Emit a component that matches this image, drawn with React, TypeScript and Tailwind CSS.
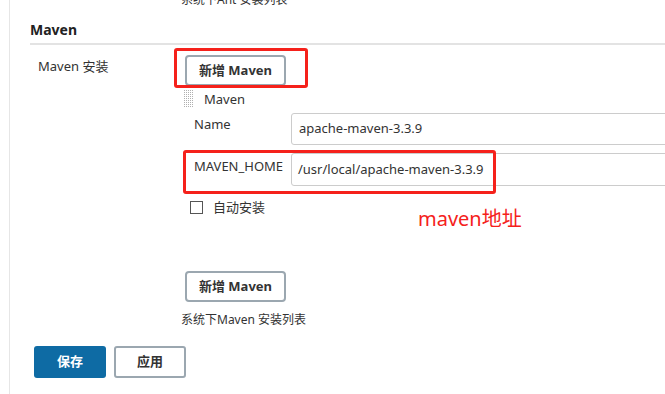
import React from 'react';

const font = { fontFamily: '"Noto Sans", "Noto Sans CJK SC", sans-serif' };

const AddButton = () => (
  <button className="w-[101px] h-[31px] rounded-[4px] border-2 border-[#9ba7b0] bg-white text-[13px] font-bold text-[#333] leading-none">
    新增 Maven
  </button>
);

const DragHandle = () => (
  <svg width="10" height="18" viewBox="0 0 10 18">
    <defs>
      <pattern id="dots" width="2" height="2" patternUnits="userSpaceOnUse">
        <rect width="1" height="1" fill="#b0b0b0" />
      </pattern>
    </defs>
    <rect width="10" height="18" fill="url(#dots)" />
  </svg>
);

export default function App() {
  return (
    <div className="relative w-[665px] h-[394px] overflow-hidden bg-white text-[#333]" style={font}>
      <div className="flow-root ml-[9px] h-full border-l border-[#e6e6e6] pl-[20px]">
        <div className="-mt-[8px] pl-[151px] text-[12px] leading-[16px]">系统下Ant 安装列表</div>

        <div className="mt-[12px] border-b-2 border-[#e3e3e3] pb-[3px] text-[14px] font-bold text-[#222] leading-[20px]">
          Maven
        </div>

        <div className="flex pt-[10px]">
          <div className="w-[155px] shrink-0 pl-[8px] pt-[3px] text-[13px] leading-[16px]">Maven 安装</div>
          <div className="flex flex-col">
            <AddButton />
            <div className="mt-[4px] flex items-center gap-[10px] -ml-[1px]">
              <DragHandle />
              <span className="text-[13px] leading-[18px]">Maven</span>
            </div>
            <div className="mt-[5px] flex">
              <div className="w-[106px] shrink-0 pl-[9px] pt-[3px] text-[13px] leading-[16px]">Name</div>
              <div className="flex h-[32px] w-[400px] shrink-0 items-center rounded-[3px] border border-[#ccc] pl-[7px] text-[13px]">
                apache-maven-3.3.9
              </div>
            </div>
            <div className="mt-[8px] flex">
              <div className="w-[106px] shrink-0 pl-[9px] pt-[5px] text-[13px] leading-[16px]">MAVEN_HOME</div>
              <div className="flex h-[33px] w-[400px] shrink-0 items-center rounded-[3px] border border-[#ccc] pl-[6px] text-[13px]">
                /usr/local/apache-maven-3.3.9
              </div>
            </div>
            <div className="mt-[13px] flex items-center pl-[5px]">
              <span className="h-[13px] w-[13px] border border-[#555] bg-white" />
              <span className="ml-[10px] text-[13px] leading-[16px]">自动安装</span>
            </div>
            <div className="mt-[56px]">
              <AddButton />
            </div>
            <div className="mt-[10px] -ml-[4px] text-[12px] leading-[16px]">系统下Maven 安装列表</div>
          </div>
        </div>

        <div className="mt-[18px] flex gap-[8px] pl-[4px]">
          <button className="h-[32px] w-[72px] rounded-[3px] bg-[#0e6ba4] text-[13px] font-bold text-white">保存</button>
          <button className="h-[32px] w-[72px] rounded-[3px] border-2 border-[#9ba7b0] bg-white text-[13px] font-bold text-[#333]">应用</button>
        </div>
      </div>

      <div className="absolute left-[174px] top-[48px] h-[40px] w-[134px] rounded-[3px] border-[3px] border-[#f5211b]" />
      <div className="absolute left-[183px] top-[150px] h-[44px] w-[313px] rounded-[3px] border-[3px] border-[#f5211b]" />
      <div className="absolute left-[418px] top-[205px] text-[20px] leading-[28px] text-[#f5211b]">maven地址</div>
    </div>
  );
}
